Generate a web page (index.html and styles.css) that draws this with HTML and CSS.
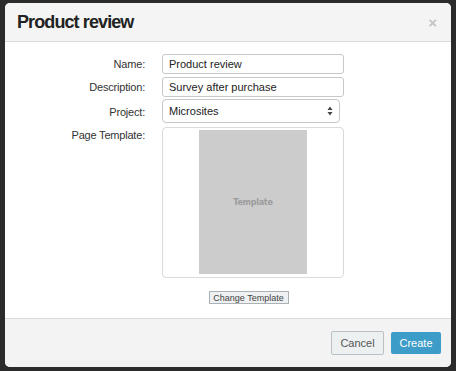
FILE: index.html
```html
<!DOCTYPE html>
<html>
<head>
    <title>Product review</title>
    <link rel="stylesheet" href="styles.css">
</head>
<body>
    <div class="modal">
        <div class="modal-header">
            <h1 class="title">Product review</h1>
            <span class="close">&times;</span>
        </div>

        <div class="modal-body">
            <div class="form">
                <label class="label">Name:</label>
                <input type="text" class="field" value="Product review">

                <label class="label">Description:</label>
                <input type="text" class="field" value="Survey after purchase">

                <label class="label">Project:</label>
                <div class="select-wrap">
                    <select class="select">
                        <option>Microsites</option>
                    </select>
                    <svg class="arrows" width="6" height="10" viewBox="0 0 6 10">
                        <path d="M3 0.5 L5.5 4 L0.5 4 Z M3 9.5 L5.5 6 L0.5 6 Z" fill="#444"/>
                    </svg>
                </div>

                <label class="label label-top">Page Template:</label>
                <div class="template-col">
                    <div class="template-box">
                        <div class="template-page">Template</div>
                    </div>
                    <button class="btn-change">Change Template</button>
                </div>
            </div>
        </div>

        <div class="modal-footer">
            <button class="btn btn-cancel">Cancel</button>
            <button class="btn btn-create">Create</button>
        </div>
    </div>
</body>
</html>
```

FILE: styles.css
```css
body{
    margin: 0;
    background-color: #2b2b2b;
    font-family: "Liberation Sans", Arial, Helvetica, sans-serif;
    color: #333;
}
.modal{
    margin: 3px 5px 0 5px;
    width: 446px;
    height: 364px;
    background-color: white;
    border-radius: 5px;
    overflow: hidden;
    display: flex;
    flex-direction: column;
}
.modal-header{
    height: 38px;
    background-color: #f4f4f4;
    border-bottom: 1px solid #dcdcdc;
    display: flex;
    align-items: center;
    justify-content: space-between;
    padding: 0 14px 0 12px;
}
.title{
    margin: 0;
    font-size: 18px;
    font-weight: 700;
    color: #222;
    letter-spacing: -0.9px;
}
.close{
    color: #c4c4c4;
    font-size: 15px;
    font-weight: 700;
    line-height: 1;
}
.modal-body{
    flex: 1;
    padding-top: 12px;
}
.form{
    display: grid;
    grid-template-columns: 140px 182px;
    column-gap: 17px;
    row-gap: 3px;
    align-items: center;
}
.label{
    text-align: right;
    font-size: 11px;
    color: #333;
    letter-spacing: -0.2px;
}
.label-top{
    align-self: start;
    padding-top: 3px;
}
.field{
    box-sizing: border-box;
    width: 182px;
    height: 20px;
    margin: 0;
    border: 1px solid #c8c8c8;
    border-radius: 3px;
    padding: 0 6px;
    font-family: inherit;
    font-size: 11px;
    color: #222;
}
.select-wrap{
    position: relative;
    width: 178px;
    height: 24px;
    margin-top: -1px;
}
.select{
    appearance: none;
    -webkit-appearance: none;
    box-sizing: border-box;
    width: 178px;
    height: 24px;
    margin: 0;
    border: 1px solid #c8c8c8;
    border-radius: 4px;
    background-color: white;
    padding: 0 6px;
    font-family: inherit;
    font-size: 11px;
    color: #222;
}
.arrows{
    position: absolute;
    right: 7px;
    top: 7px;
}
.template-col{
    display: flex;
    flex-direction: column;
    align-items: center;
    width: 182px;
    margin-top: 1px;
}
.template-box{
    box-sizing: border-box;
    width: 182px;
    height: 151px;
    border: 1px solid #dadada;
    border-radius: 4px;
    display: flex;
    justify-content: center;
    padding-top: 2px;
}
.template-page{
    width: 108px;
    height: 144px;
    background-color: #cccccc;
    color: #9b9b9b;
    font-family: "DejaVu Sans Condensed", "DejaVu Sans", sans-serif;
    font-stretch: condensed;
    font-weight: 700;
    font-size: 9px;
    letter-spacing: -0.3px;
    display: flex;
    align-items: center;
    justify-content: center;
}
.btn-change{
    box-sizing: border-box;
    margin-top: 13px;
    margin-left: -9px;
    height: 13px;
    width: 80px;
    padding: 0;
    border: 1px solid #aab2b6;
    background-color: #eef0f1;
    font-family: inherit;
    font-size: 9px;
    line-height: 10px;
    color: #444;
}
.modal-footer{
    height: 47px;
    background-color: #f3f3f3;
    border-top: 1px solid #dcdcdc;
    display: flex;
    align-items: center;
    justify-content: flex-end;
    padding: 0 10px 1px 0;
    gap: 7px;
}
.btn{
    font-family: inherit;
    font-size: 11px;
    border-radius: 2px;
    margin: 0;
}
.btn-cancel{
    width: 53px;
    height: 24px;
    background-color: #ecf0f1;
    border: 1px solid #b9c1c5;
    color: #555;
}
.btn-create{
    width: 50px;
    height: 22px;
    background-color: #3d9cc8;
    border: none;
    color: white;
}
```
